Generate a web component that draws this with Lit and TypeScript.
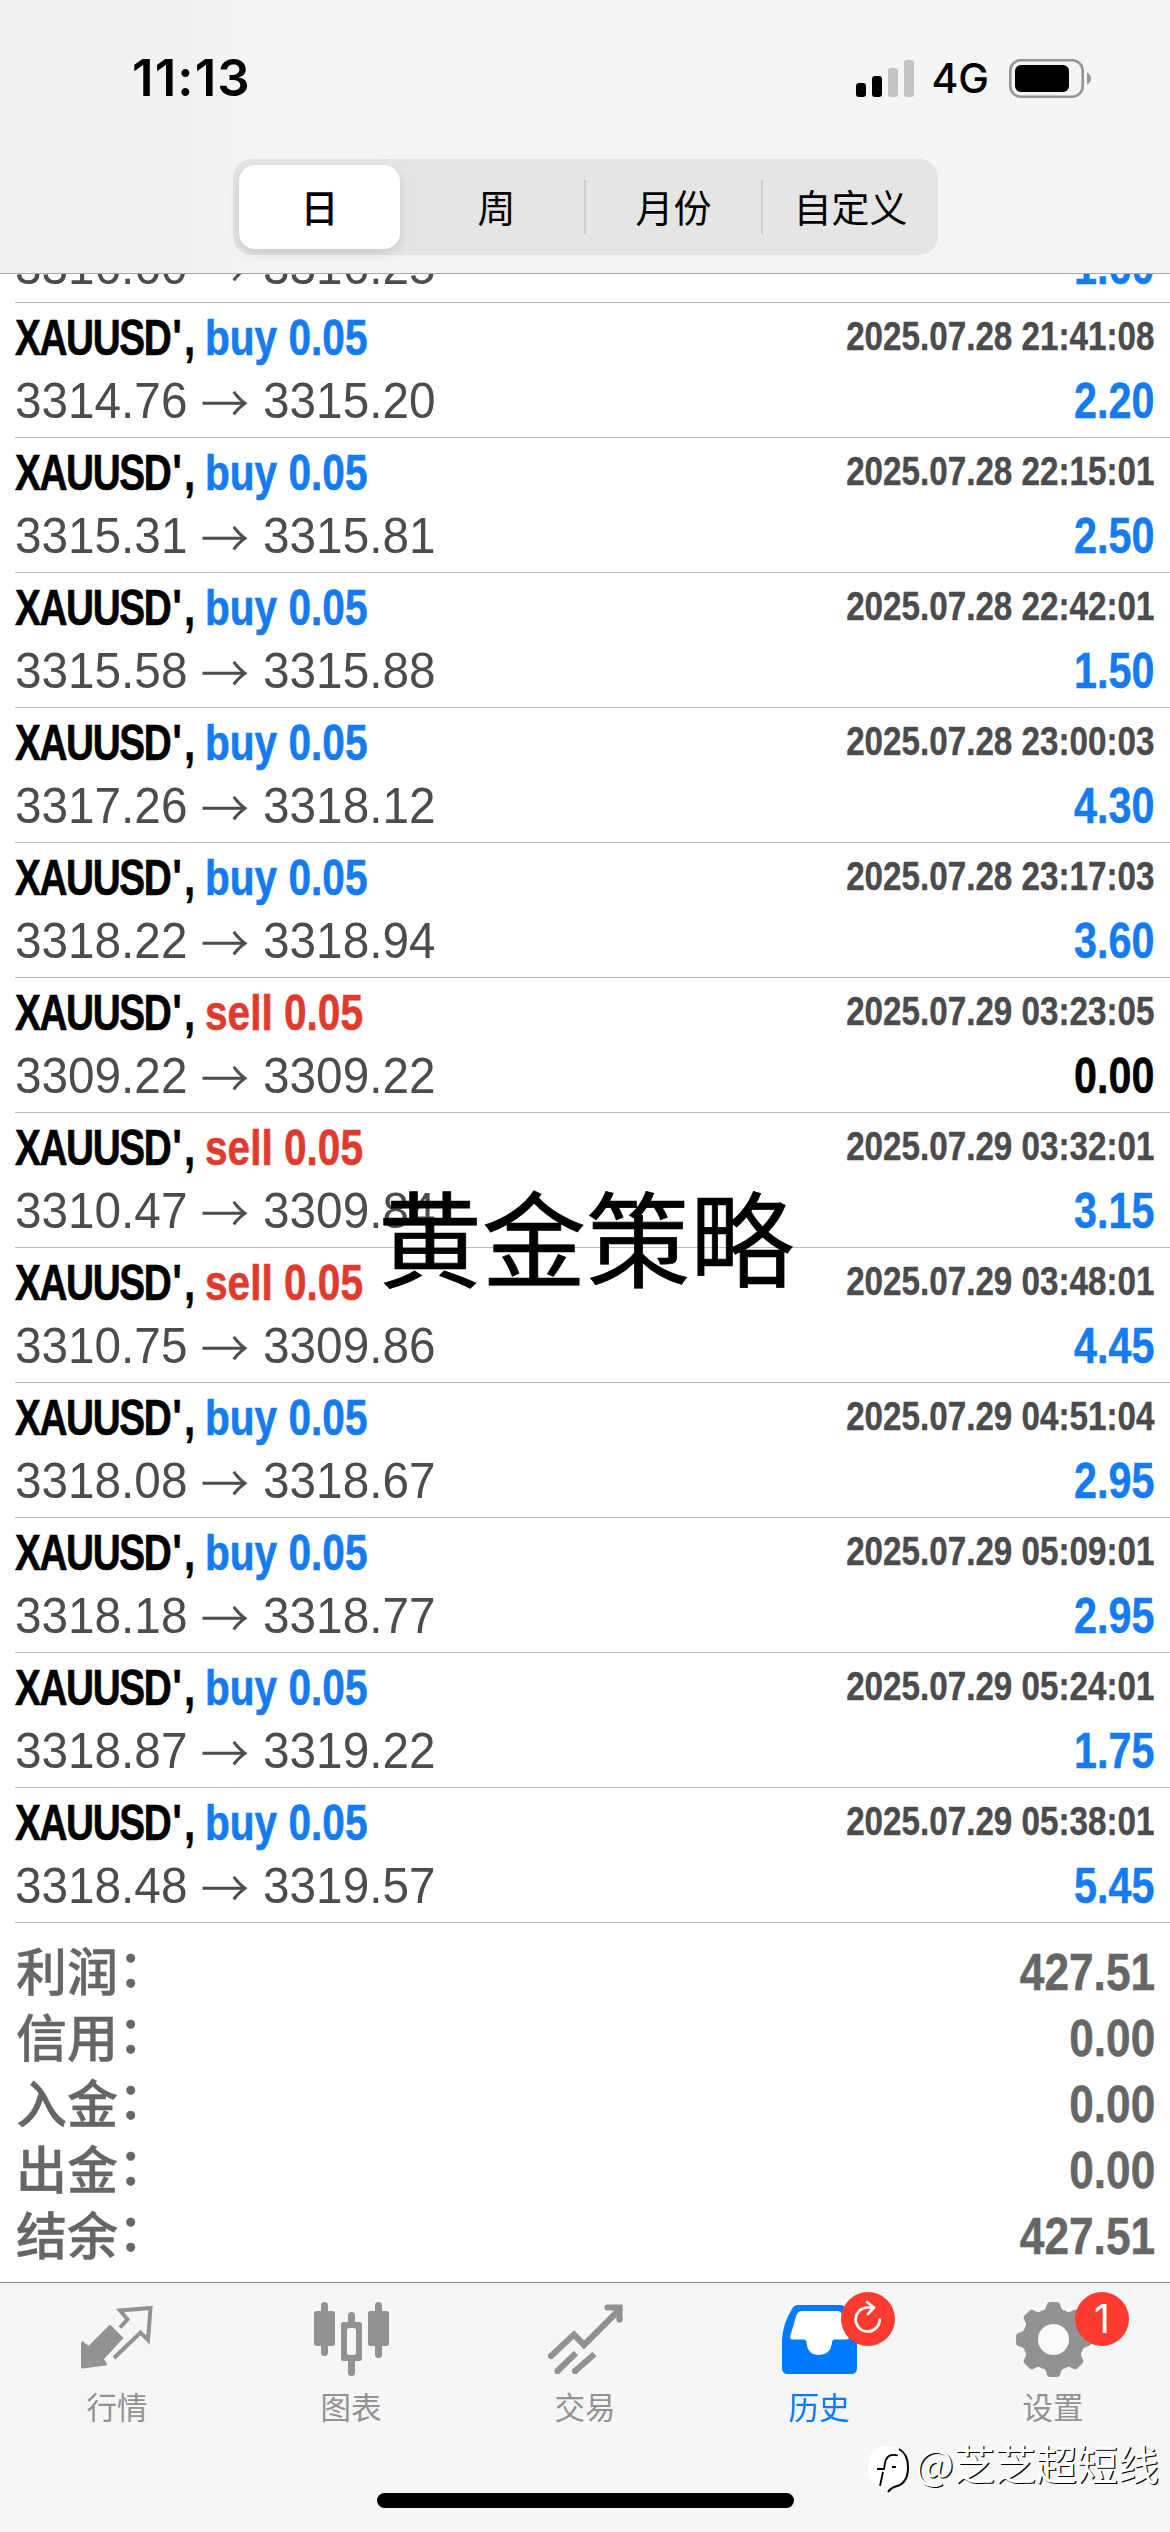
import { LitElement, html, svg, css } from "lit";
import { customElement } from "lit/decorators.js";

type Deal = [side: string, open: string, close: string, time: string, profit: string];

const DEALS: Deal[] = [
  ["buy", "3314.76", "3315.20", "2025.07.28 21:41:08", "2.20"],
  ["buy", "3315.31", "3315.81", "2025.07.28 22:15:01", "2.50"],
  ["buy", "3315.58", "3315.88", "2025.07.28 22:42:01", "1.50"],
  ["buy", "3317.26", "3318.12", "2025.07.28 23:00:03", "4.30"],
  ["buy", "3318.22", "3318.94", "2025.07.28 23:17:03", "3.60"],
  ["sell", "3309.22", "3309.22", "2025.07.29 03:23:05", "0.00"],
  ["sell", "3310.47", "3309.84", "2025.07.29 03:32:01", "3.15"],
  ["sell", "3310.75", "3309.86", "2025.07.29 03:48:01", "4.45"],
  ["buy", "3318.08", "3318.67", "2025.07.29 04:51:04", "2.95"],
  ["buy", "3318.18", "3318.77", "2025.07.29 05:09:01", "2.95"],
  ["buy", "3318.87", "3319.22", "2025.07.29 05:24:01", "1.75"],
  ["buy", "3318.48", "3319.57", "2025.07.29 05:38:01", "5.45"],
];

const TOTALS = [
  ["利润", "427.51"],
  ["信用", "0.00"],
  ["入金", "0.00"],
  ["出金", "0.00"],
  ["结余", "427.51"],
];

// Eight-tooth gear outline centred on (0, 0).
const gearPath = (() => {
  const pts: string[] = [];
  for (let i = 0; i < 8; i++) {
    const c = (i * Math.PI) / 4;
    const at = (a: number, r: number) =>
      `${(Math.sin(c + a) * r).toFixed(2)} ${(-Math.cos(c + a) * r).toFixed(2)}`;
    pts.push(`${i ? "L" : "M"}${at(-0.36, 29.5)}`);
    pts.push(`L${at(-0.24, 32.5)}`, `L${at(-0.18, 36)}`);
    pts.push(`Q${at(-0.16, 37.6)} ${at(-0.1, 37.6)}`, `L${at(0.1, 37.6)}`);
    pts.push(`Q${at(0.16, 37.6)} ${at(0.18, 36)}`, `L${at(0.24, 32.5)}`, `L${at(0.36, 29.5)}`);
  }
  return pts.join(" ") + "Z";
})();

const ICONS = {
  quotes: svg`
    <path fill="currentColor" stroke="currentColor" stroke-width="3" stroke-linejoin="round"
      d="M2.500 37 L8.500 42 L30 20.500 L41.500 32 L22 53 L25.500 58 L2.500 61Z"/>
    <path fill="none" stroke="currentColor" stroke-width="4"
      d="M40 21.500 L47.500 13.500 L40 4.500 L70.500 2 L68 34 L60.500 26.500 L34 52"/>`,
  charts: svg`
    <g fill="currentColor">
      <rect x="0" y="5" width="21" height="35" rx="2.500"/><rect x="7" y="-4" width="7" height="54" rx="3.500"/>
      <rect x="54" y="5" width="21" height="35" rx="2.500"/><rect x="61" y="-4" width="7" height="56" rx="3.500"/>
      <rect x="34" y="6" width="7" height="14" rx="3.500"/><rect x="34" y="50" width="7" height="20" rx="3.500"/>
      <path fill-rule="evenodd" d="M29.500 16h16a2.500 2.500 0 0 1 2.500 2.500v34a2.500 2.500 0 0 1-2.500 2.500h-16a2.500 2.500 0 0 1-2.500-2.500v-34a2.500 2.500 0 0 1 2.500-2.500Z M35.500 22a2.500 2.500 0 0 0-2.500 2.500v22a2.500 2.500 0 0 0 2.500 2.500h4a2.500 2.500 0 0 0 2.500-2.500v-22a2.500 2.500 0 0 0-2.500-2.500Z"/>
    </g>`,
  trade: svg`
    <g fill="none" stroke="currentColor" stroke-width="6.200" stroke-linejoin="miter">
      <path stroke-linecap="round" d="M3 50 L26 28.500 L36 39 L71 4"/>
      <path stroke-linecap="round" d="M59.500 1.500 H71.500 V13.500"/>
      <path d="M9 65.500 L28 47 M26.500 65.500 L46.500 48"/>
    </g>
    <circle cx="9.500" cy="65" r="3.100" fill="currentColor"/><circle cx="27" cy="65" r="3.100" fill="currentColor"/>`,
  history: svg`
    <path fill="currentColor" d="M16 -1 H59 Q62 -1 64 3 Q75 18 75 34 V62 Q75 68 69 68 H6 Q0 68 0 62 V34 Q1 17 10 3 Q12 -1 16 -1Z"/>
    <path fill="#fff" d="M20 5 H55 Q59 5 60.500 9 L67 30 Q67.500 33.500 64 33.500 H52 Q50 34 49.800 38 Q48 49 37 49 Q26 49 24.800 38 Q24.500 34 22.500 33.500 H11 Q7 33.500 8.500 29 L14.500 9 Q16 5 20 5Z"/>`,
  settings: svg`
    <g transform="translate(37.500 33.500)"><path fill="currentColor" d=${gearPath}/>
    <circle r="31" fill="currentColor"/><circle r="15.500" fill="#fafafa"/></g>`,
};

const TABS = [
  { label: "行情", icon: ICONS.quotes },
  { label: "图表", icon: ICONS.charts },
  { label: "交易", icon: ICONS.trade },
  { label: "历史", icon: ICONS.history, active: true, badge: "sync" },
  { label: "设置", icon: ICONS.settings, badge: "1" },
];

@customElement("app-root")
export class AppRoot extends LitElement {
  static styles = css`
    :host {
      display: flex;
      flex-direction: column;
      position: relative;
      width: 1170px;
      height: 2532px;
      overflow: hidden;
      background: #fff;
      color: #000;
      font-family: "Liberation Sans", "Noto Sans CJK SC", sans-serif;
      white-space: nowrap;
    }
    * { box-sizing: border-box; }
    svg { display: block; overflow: visible; }
    .header {
      flex: none;
      height: 274px;
      border-bottom: 1px solid #a8a8a9;
      background: linear-gradient(90deg, #f0f0f0 0, #f2f1f1 180px, #f6f5f5 250px, #f5f5f5 760px, #f3f4f6 1170px);
    }
    .status {
      height: 156px;
      padding: 0 79px 0 132px;
      display: flex;
      align-items: center;
    }
    .clock {
      font: 600 51px/60px Inter, sans-serif;
      letter-spacing: 1.100px;
      flex: 1;
    }
    .signal { margin-right: 17px; }
    .net { font: 500 41px/60px Inter, sans-serif; margin-right: 20px; }
    .segments {
      width: 705px;
      height: 96px;
      margin: 3px 0 0 233px;
      padding: 6px 0 6px 6px;
      border-radius: 19px;
      background: #e5e5e6;
      display: flex;
      align-items: center;
      font: 400 38px/82px "Noto Sans CJK SC", sans-serif;
    }
    .segment { flex: 1; text-align: center; height: 84px; }
    .segment.on {
      flex: none;
      width: 161px;
      margin-right: 9px;
      border-radius: 16px;
      background: #fff;
      font-weight: 500;
      box-shadow: 0 4px 12px rgba(0, 0, 0, 0.13);
    }
    .rule { width: 2px; height: 54px; background: #cdcdcf; }

    .list { flex: none; height: 1649px; padding-left: 15px; }
    .deal {
      height: 135px;
      padding: 10px 16px 0 0;
      border-bottom: 1px solid #bcbcbe;
    }
    .deal.clipped { height: 29px; padding-top: 0; overflow: hidden; }
    .clipped .line { margin-top: -32px; }
    .line { display: flex; justify-content: space-between; height: 63px; line-height: 50px; }
    .pair { display: flex; font-size: 50px; font-weight: 700; -webkit-text-stroke: 0.6px currentColor; }
    .symbol { width: 190px; }
    .narrow { display: inline-block; transform-origin: 0 50%; }
    .symbol .narrow { transform: scaleX(0.775); letter-spacing: -1.800px; }
    .tick { margin-left: 3px; letter-spacing: 3px; }
    .side .narrow { transform: scaleX(0.812); }
    .buy { color: #147bf2; }
    .sell { color: #e03a2f; }
    .time {
      font-size: 40px;
      line-height: 47px;
      font-weight: 700;
      color: #4b4b4e;
      -webkit-text-stroke: 0.4px currentColor;
      transform: scaleX(0.83);
      transform-origin: 100% 50%;
    }
    .prices {
      display: flex;
      font-size: 50px;
      color: #4c4c4e;
      transform: scaleX(0.954);
      transform-origin: 0 50%;
    }
    .price { width: 195px; }
    .arrow { width: 65px; font: 300 50px/48px "Noto Sans CJK SC", sans-serif; -webkit-text-stroke: 0.6px currentColor; }
    .profit {
      font-size: 50px;
      font-weight: 700;
      color: #147bf2;
      -webkit-text-stroke: 0.5px currentColor;
      transform: scaleX(0.825);
      transform-origin: 100% 50%;
    }
    .zero { color: #000; }

    .totals { flex: 1; padding: 17px 15px 0 16px; color: #666; }
    .total { display: flex; justify-content: space-between; height: 66px; }
    .name {
      font: 500 51px/58px "Noto Sans CJK SC", sans-serif;
      display: flex;
      -webkit-text-stroke: 0.4px currentColor;
    }
    .colon { transform: translate(0, -4px); }
    .sum {
      font-size: 52px;
      line-height: 64px;
      font-weight: 700;
      -webkit-text-stroke: 0.5px currentColor;
      transform: scaleX(0.85);
      transform-origin: 100% 50%;
    }

    .tabs {
      flex: none;
      height: 250px;
      border-top: 1px solid #8e8e90;
      background: #f6f6f6;
      display: grid;
      grid-template-columns: repeat(5, 234px);
      align-content: start;
      color: #929292;
    }
    .tab { display: flex; flex-direction: column; align-items: center; padding-top: 23px; position: relative; }
    .tab.on { color: #007aff; }
    .caption { margin-top: 3px; font: 400 30.500px/44px "Noto Sans CJK SC", sans-serif; }
    .badge {
      position: absolute;
      left: 139px;
      top: 9px;
      width: 54px;
      height: 54px;
      border-radius: 50%;
      background: #ff3b30;
      color: #fff;
      font: 400 39px/54px Inter, sans-serif;
      text-align: center;
    }
    .home {
      position: absolute;
      left: 377px;
      top: 2493px;
      width: 417px;
      height: 15px;
      border-radius: 8px;
      background: #000;
    }
    .overlay {
      position: absolute;
      left: 378px;
      top: 1160px;
      font: 400 104px/150px "Noto Sans CJK SC", sans-serif;
      -webkit-text-stroke: 0.7px currentColor;
    }
    .watermark {
      position: absolute;
      left: 868px;
      top: 2430px;
      display: flex;
      align-items: center;
      font: 400 41px/60px "Noto Sans CJK SC", sans-serif;
      color: #fff;
      text-shadow: 1.200px 1.200px 0 #000;
    }
    .handle { margin-left: 5px; }
    .mark { margin-top: 16px; }
  `;

  private line2([, open, close, , profit]: Deal) {
    return html`<div class="line">
      <div class="prices">
        <span class="price">${open}</span><span class="arrow">→</span><span>${close}</span>
      </div>
      <div class="profit ${profit === "0.00" ? "zero" : ""}">${profit}</div>
    </div>`;
  }

  private deal(d: Deal) {
    const [side, , , time] = d;
    return html`<div class="deal">
      <div class="line">
        <div class="pair">
          <div class="symbol"><span class="narrow">XAUUSD<span class="tick">',</span></span></div>
          <div class="side ${side}"><span class="narrow">${side} 0.05</span></div>
        </div>
        <div class="time">${time}</div>
      </div>
      ${this.line2(d)}
    </div>`;
  }

  private badge(kind?: string) {
    if (!kind) return null;
    if (kind !== "sync") return html`<span class="badge">${kind}</span>`;
    return html`<span class="badge"><svg width="54" height="54" viewBox="0 0 54 54" fill="none" stroke="#fff" stroke-width="2.700" stroke-linecap="round" stroke-linejoin="round">
      <path d="M38.700 27.500 A12 12 0 1 1 27 15.500 L33 15.500 M26 10 L33 15.500 L27 22"/></svg></span>`;
  }

  render() {
    return html`
      <div class="header">
        <div class="status">
          <div class="clock">11:13</div>
          <svg class="signal" width="58" height="37" viewBox="0 0 58 37">
            <rect x="0" y="23" width="10" height="14" rx="3"/><rect x="16" y="16" width="10" height="21" rx="3"/>
            <rect x="32" y="8" width="10" height="29" rx="3" fill="#c3c3c4"/><rect x="48" y="0" width="10" height="37" rx="3" fill="#c3c3c4"/>
          </svg>
          <div class="net">4G</div>
          <svg width="82" height="39" viewBox="0 0 82 39">
            <rect x="1.300" y="1.300" width="72.400" height="36.400" rx="10.500" fill="none" stroke="#969698" stroke-width="2.600"/>
            <rect x="6" y="6" width="54" height="27" rx="6"/>
            <path d="M78 13.500 Q82 15.500 82 19.500 Q82 23.500 78 25.500Z" fill="#969698"/>
          </svg>
        </div>
        <div class="segments">
          <div class="segment on">日</div>
          <div class="segment">周</div><div class="rule"></div>
          <div class="segment">月份</div><div class="rule"></div>
          <div class="segment">自定义</div>
        </div>
      </div>
      <div class="list">
        <div class="deal clipped">${this.line2(["buy", "3316.60", "3316.25", "", "1.60"])}</div>
        ${DEALS.map((d) => this.deal(d))}
      </div>
      <div class="totals">
        ${TOTALS.map(([name, sum]) => html`<div class="total"><span class="name">${name}<span class="colon">：</span></span><span class="sum">${sum}</span></div>`)}
      </div>
      <div class="tabs">
        ${TABS.map(
          (t) => html`<div class="tab ${t.active ? "on" : ""}">
            <svg width="75" height="75" viewBox="0 0 75 75">${t.icon}</svg>
            <span class="caption">${t.label}</span>${this.badge(t.badge)}
          </div>`,
        )}
      </div>
      <div class="home"></div>
      <div class="overlay">黄金策略</div>
      <div class="watermark">
        <svg class="mark" width="42" height="48" viewBox="0 0 42 48">
          <path fill="#fff" d="M20 0 Q39 0 39 21 Q39 36 28 39 Q22 41 20 45 L14 43 Q0 38 0 21 Q0 0 20 0Z"/>
          <path fill="none" stroke="#000" stroke-width="2" d="M31 3 Q40 8 40 21 Q40 37 29 40 Q23 41.500 20 46"/>
          <path fill="none" stroke="#000" stroke-width="1.800" d="M30 9.500 Q19 6.500 17 17 L16 23 H9 M15 26 L12 40 M24 21 H28"/>
        </svg>
        <span class="handle">@芝芝超短线</span>
      </div>
    `;
  }
}
